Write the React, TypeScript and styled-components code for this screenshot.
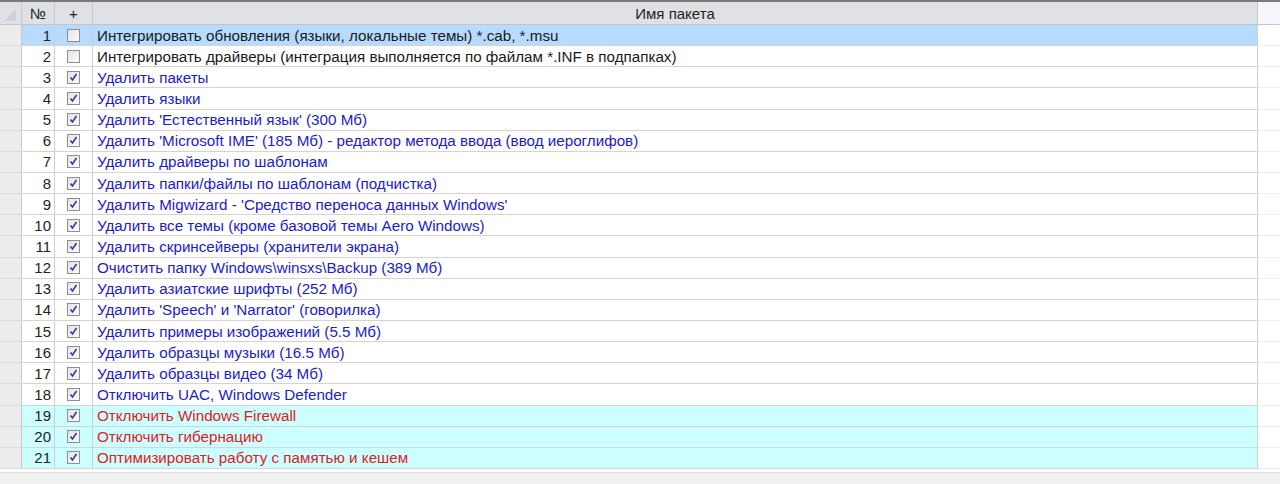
import React from "react";
import styled, { createGlobalStyle } from "styled-components";

const Global = createGlobalStyle`
  body { margin: 0; background: #fff; font-family: "Liberation Sans", Arial, sans-serif; }
`;

const Frame = styled.div`
  width: 1280px;
  height: 484px;
  border-top: 2px solid #7a7a7a;
  box-sizing: border-box;
  display: flex;
  flex-direction: column;
  overflow: hidden;
`;

const Body = styled.div`
  flex: 1;
`;

const Grid = styled.div`
  display: grid;
  grid-template-columns: 22px 33px 38px 1165px 22px;
`;

const HeadCell = styled.div<{ $blank?: boolean }>`
  height: 22px;
  background: ${(p) => (p.$blank ? "#f6f6fc" : "#dfe1e4")};
  border-right: 1px solid ${(p) => (p.$blank ? "transparent" : "#c8c8c8")};
  border-bottom: 1px solid #c4c4c4;
  display: flex;
  align-items: center;
  justify-content: center;
  font-size: 15px;
  color: #222;
  position: relative;
  overflow: hidden;
`;

const Corner = styled.svg`
  position: absolute;
  left: 4px;
  bottom: 3px;
`;

const Cell = styled.div<{ $bg: string; $align?: string }>`
  height: 20.15px;
  background: ${(p) => p.$bg};
  border-right: 1px solid #cfcfcf;
  border-bottom: 1px solid #d4d4d4;
  display: flex;
  align-items: center;
  justify-content: ${(p) => p.$align || "flex-start"};
  font-size: 15px;
  white-space: nowrap;
  overflow: hidden;
`;

const Indicator = styled(Cell)`
  border-right: 1px solid #c8c8c8;
  border-bottom: 1px solid #dcdcdc;
`;

const Num = styled(Cell)`
  padding-right: 3px;
  color: #222;
`;

const Name = styled(Cell)<{ $color: string }>`
  padding-left: 4px;
  color: ${(p) => p.$color};
  font-size: 15.2px;
`;

const Spare = styled.div`
  height: 20.15px;
  border-bottom: 1px solid #efefef;
`;

const Box = styled.span`
  width: 11px;
  height: 11px;
  border: 1px solid #8f8f8f;
  background: linear-gradient(135deg, #e4e4e4, #fbfbfb);
  display: flex;
  align-items: center;
  justify-content: center;
`;

const Footer = styled.div`
  height: 11px;
  background: #f0f0f0;
  border-top: 1px solid #dcdcdc;
`;

type Row = { t: string; c: boolean; k: "b" | "u" | "r" };

const rows: Row[] = [
  { t: "Интегрировать обновления (языки, локальные темы) *.cab, *.msu", c: false, k: "b" },
  { t: "Интегрировать драйверы (интеграция выполняется по файлам *.INF в подпапках)", c: false, k: "b" },
  { t: "Удалить пакеты", c: true, k: "u" },
  { t: "Удалить языки", c: true, k: "u" },
  { t: "Удалить 'Естественный язык' (300 Мб)", c: true, k: "u" },
  { t: "Удалить 'Microsoft IME' (185 Мб) - редактор метода ввода (ввод иероглифов)", c: true, k: "u" },
  { t: "Удалить драйверы по шаблонам", c: true, k: "u" },
  { t: "Удалить папки/файлы по шаблонам (подчистка)", c: true, k: "u" },
  { t: "Удалить Migwizard - 'Средство переноса данных Windows'", c: true, k: "u" },
  { t: "Удалить все темы (кроме базовой темы Aero Windows)", c: true, k: "u" },
  { t: "Удалить скринсейверы (хранители экрана)", c: true, k: "u" },
  { t: "Очистить папку Windows\\winsxs\\Backup (389 Мб)", c: true, k: "u" },
  { t: "Удалить азиатские шрифты (252 Мб)", c: true, k: "u" },
  { t: "Удалить 'Speech' и 'Narrator' (говорилка)", c: true, k: "u" },
  { t: "Удалить примеры изображений (5.5 Мб)", c: true, k: "u" },
  { t: "Удалить образцы музыки (16.5 Мб)", c: true, k: "u" },
  { t: "Удалить образцы видео (34 Мб)", c: true, k: "u" },
  { t: "Отключить UAC, Windows Defender", c: true, k: "u" },
  { t: "Отключить Windows Firewall", c: true, k: "r" },
  { t: "Отключить гибернацию", c: true, k: "r" },
  { t: "Оптимизировать работу с памятью и кешем", c: true, k: "r" },
];

const colors = { b: "#1a1a1a", u: "#1c1cc8", r: "#e0201c" };

export default function App() {
  return (
    <Frame>
      <Global />
      <Body>
        <Grid>
          <HeadCell>
            <Corner width="12" height="12" viewBox="0 0 12 12">
              <polygon points="12,0 12,12 0,12" fill="#d0d2d6" />
            </Corner>
          </HeadCell>
          <HeadCell>№</HeadCell>
          <HeadCell>+</HeadCell>
          <HeadCell>Имя пакета</HeadCell>
          <HeadCell $blank />
          {rows.map((r, i) => {
            const bg = i === 0 ? "#b6dbff" : r.k === "r" ? "#ccffff" : "#fff";
            return (
              <React.Fragment key={i}>
                <Indicator $bg="#ececec" />
                <Num $bg={bg} $align="flex-end">{i + 1}</Num>
                <Cell $bg={bg} $align="center">
                  <Box>
                    {r.c && (
                      <svg width="9" height="9" viewBox="0 0 9 9">
                        <path d="M1.5 4.5 L3.5 7 L7.5 1" stroke="#2a3ea8" strokeWidth="1.6" fill="none" />
                      </svg>
                    )}
                  </Box>
                </Cell>
                <Name $bg={bg} $color={colors[r.k]}>{r.t}</Name>
                <Spare />
              </React.Fragment>
            );
          })}
        </Grid>
      </Body>
      <Footer />
    </Frame>
  );
}
